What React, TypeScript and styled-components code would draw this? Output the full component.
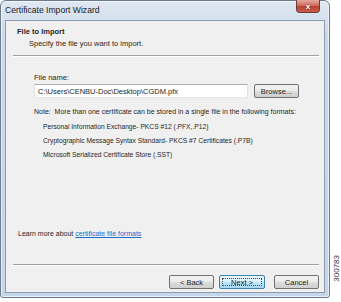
import React from "react";
import styled, { createGlobalStyle } from "styled-components";

const GlobalStyle = createGlobalStyle`
  html, body {
    margin: 0;
    padding: 0;
    background: #ffffff;
  }
  body {
    font-family: "Liberation Sans", Arial, sans-serif;
    font-size: 7.5px;
    color: #262626;
  }
`;

const Page = styled.div`
  display: flex;
  align-items: flex-start;
  width: 341px;
  height: 302px;
`;

const Window = styled.div`
  width: 330px;
  height: 298px;
  box-sizing: border-box;
  border: 1px solid #6d7b8c;
  border-radius: 6px 6px 3px 3px;
  background: linear-gradient(#dfe8f2, #c9d8ea 40px, #c6d6ea);
  display: flex;
  flex-direction: column;
  padding: 0 4px 4px 4px;
  box-shadow: inset 0 0 0 1px rgba(255, 255, 255, 0.6);
`;

const TitleBar = styled.div`
  height: 19px;
  display: flex;
  align-items: flex-start;
  justify-content: space-between;
`;

const Title = styled.span`
  font-size: 8.6px;
  color: #1a1a1a;
  margin-top: 4px;
`;

const CloseButton = styled.div`
  width: 24px;
  height: 13px;
  margin-right: 5px;
  margin-top: -1px;
  box-sizing: border-box;
  border: 1px solid #6e3a35;
  border-top: none;
  border-radius: 0 0 4px 4px;
  background: linear-gradient(#e3a89d, #cf6f60 45%, #b8402f 55%, #c9604c);
  color: #ffffff;
  font-weight: bold;
  font-size: 8px;
  display: flex;
  align-items: center;
  justify-content: center;
  text-shadow: 0 0 2px #6a1f14;
`;

const Client = styled.div`
  flex: 1;
  background: #f0f0f0;
  border: 1px solid #8e9cae;
  display: flex;
  flex-direction: column;
`;

const Header = styled.div`
  padding: 6px 0 0 11px;
  height: 28px;
`;

const HeaderTitle = styled.div`
  font-weight: bold;
`;

const HeaderSub = styled.div`
  margin-top: 3px;
  margin-left: 12px;
`;

const Rule = styled.div`
  height: 1px;
  background: #a0a0a0;
  border-bottom: 1px solid #ffffff;
  margin: 0 5px 0 7px;
`;

const Body = styled.div`
  flex: 1;
  display: flex;
  flex-direction: column;
  padding: 16px 0 0 28px;
`;

const Label = styled.div``;

const FileRow = styled.div`
  display: flex;
  gap: 6px;
  margin-top: 2px;
`;

const FileInput = styled.div`
  width: 214px;
  height: 14px;
  box-sizing: border-box;
  background: #ffffff;
  border: 1px solid #abadb3;
  border-color: #abadb3 #e2e3ea #e3e9ef #e2e3ea;
  padding-left: 3px;
  display: flex;
  align-items: center;
`;

const Button = styled.div<{ $focused?: boolean; $gapBefore?: number }>`
  width: ${({ $focused }) => ($focused ? "46px" : "45px")};
  height: 14px;
  box-sizing: border-box;
  margin-left: ${({ $gapBefore }) => $gapBefore ?? 0}px;
  border: 1px solid ${({ $focused }) => ($focused ? "#3c7fb1" : "#707070")};
  border-radius: 2px;
  background: ${({ $focused }) =>
    $focused
      ? "linear-gradient(#eaf6fd, #d9f0fc 50%, #bee6fd 50%, #a7d9f5)"
      : "linear-gradient(#f2f2f2, #ebebeb 50%, #dddddd 50%, #cfcfcf)"};
  display: flex;
  align-items: center;
  justify-content: center;
  position: relative;

  &::after {
    content: "";
    display: ${({ $focused }) => ($focused ? "block" : "none")};
    position: absolute;
    inset: 2px;
    border: 1px dotted #4a4a4a;
  }
`;

const Note = styled.div`
  margin-top: 10px;
  font-size: 7px;
`;

const Formats = styled.div`
  display: flex;
  flex-direction: column;
  gap: 7px;
  margin: 8px 0 0 9px;
  font-size: 6.7px;
`;

const LearnMore = styled.div`
  margin: auto 0 27px -16px;
  font-size: 7px;
`;

const Link = styled.span`
  color: #1a6fc9;
  text-decoration: underline;
`;

const Footer = styled.div`
  display: flex;
  justify-content: flex-end;
  padding: 9px 5px 3px 0;
`;

const SideTag = styled.div`
  writing-mode: vertical-rl;
  transform: rotate(180deg);
  font-size: 8px;
  color: #333333;
  margin-top: 255px;
  margin-left: 2px;
`;

export default function App() {
  return (
    <>
      <GlobalStyle />
      <Page>
        <Window>
          <TitleBar>
            <Title>Certificate Import Wizard</Title>
            <CloseButton>x</CloseButton>
          </TitleBar>
          <Client>
            <Header>
              <HeaderTitle>File to Import</HeaderTitle>
              <HeaderSub>Specify the file you want to import.</HeaderSub>
            </Header>
            <Rule />
            <Body>
              <Label>File name:</Label>
              <FileRow>
                <FileInput>C:\Users\CENBU-Doc\Desktop\CGDM.pfx</FileInput>
                <Button>Browse...</Button>
              </FileRow>
              <Note>
                Note:&nbsp; More than one certificate can be stored in a single file in the following formats:
              </Note>
              <Formats>
                <span>Personal Information Exchange- PKCS #12 (.PFX,.P12)</span>
                <span>Cryptographic Message Syntax Standard- PKCS #7 Certificates (.P7B)</span>
                <span>Microsoft Serialized Certificate Store (.SST)</span>
              </Formats>
              <LearnMore>
                Learn more about <Link>certificate file formats</Link>
              </LearnMore>
            </Body>
            <Rule />
            <Footer>
              <Button>&lt; Back</Button>
              <Button $focused $gapBefore={5}>Next &gt;</Button>
              <Button $gapBefore={9}>Cancel</Button>
            </Footer>
          </Client>
        </Window>
        <SideTag>300783</SideTag>
      </Page>
    </>
  );
}
